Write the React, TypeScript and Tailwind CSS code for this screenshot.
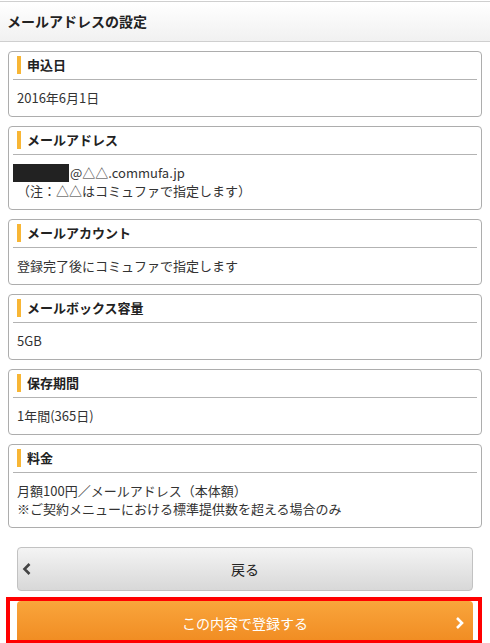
import React from 'react';

// Mail address settings confirmation screen
type Item = { title: string; lines: React.ReactNode[] };

const items: Item[] = [
  { title: '申込日', lines: ['2016年6月1日'] },
  {
    title: 'メールアドレス',
    lines: [
      <span key="a" className="flex items-center">
        <span className="-ml-[4px] inline-block h-[18px] w-[56px] bg-[#222]" />
        <span className="ml-[1px]">@△△.commufa.jp</span>
      </span>,
      '（注：△△はコミュファで指定します）',
    ],
  },
  { title: 'メールアカウント', lines: ['登録完了後にコミュファで指定します'] },
  { title: 'メールボックス容量', lines: ['5GB'] },
  { title: '保存期間', lines: ['1年間(365日)'] },
  {
    title: '料金',
    lines: ['月額100円／メールアドレス（本体額）', '※ご契約メニューにおける標準提供数を超える場合のみ'],
  },
];

const InfoCard: React.FC<{ item: Item }> = ({ item }) => (
  <div className="rounded-[4px] border border-[#adadad] bg-white">
    <div className="flex items-center pt-[4px] pb-[5px] pl-[8px]">
      <span className="h-[18px] w-[4px] bg-[#f8b635]" />
      <span className="ml-[6px] text-[13px] font-bold leading-[18px] text-[#222]">{item.title}</span>
    </div>
    <div className="mx-[4px] h-px bg-[#b3b3b3]" />
    <div className="py-[9px] pl-[8px] text-[13px] leading-[18px] text-[#333]">
      {item.lines.map((l, i) => (
        <div key={i}>{l}</div>
      ))}
    </div>
  </div>
);

export default function App() {
  return (
    <div
      className="min-h-[643px] w-full overflow-hidden bg-white"
      style={{ fontFamily: '"Noto Sans CJK JP", "Noto Sans", sans-serif' }}
    >
      {/* Header */}
      <div className="mt-px flex h-[41px] items-center border-y border-[#cfcfcf] bg-gradient-to-b from-white to-[#f1f1f1] pl-[7px]">
        <h1 className="text-[14px] font-bold text-[#222]">メールアドレスの設定</h1>
      </div>

      {/* Info cards */}
      <div className="mt-[9px] flex flex-col gap-[9px] pl-[8px] pr-[8px]">
        {items.map((it) => (
          <InfoCard key={it.title} item={it} />
        ))}
      </div>

      {/* Buttons */}
      <div className="mt-[19px] px-[17px]">
        <button className="relative flex h-[44px] w-full items-center justify-center rounded-[4px] border border-[#c2c2c2] bg-gradient-to-b from-[#f4f4f4] to-[#d8d8d8] text-[14px] text-[#222]">
          <svg className="absolute left-[3px] top-1/2 -translate-y-1/2" width="12" height="14" viewBox="0 0 12 14">
            <path d="M8.5 2 L3.5 7 L8.5 12" fill="none" stroke="#444" strokeWidth="2.6" />
          </svg>
          戻る
        </button>
      </div>

      <div className="relative mt-[10px] px-[17px]">
        <button className="relative flex h-[44px] w-full items-center justify-center rounded-t-[4px] bg-gradient-to-b from-[#f9a53b] to-[#f08a1f] text-[14px] text-white">
          この内容で登録する
          <svg className="absolute right-[8px] top-1/2 -translate-y-1/2" width="12" height="14" viewBox="0 0 12 14">
            <path d="M4 2 L9 7 L4 12" fill="none" stroke="#fff" strokeWidth="2.6" />
          </svg>
        </button>
        {/* highlight frame */}
        <div className="pointer-events-none absolute left-[6px] top-[-4px] h-[47px] w-[476px] border-4 border-[#ff0000]" />
      </div>
    </div>
  );
}
